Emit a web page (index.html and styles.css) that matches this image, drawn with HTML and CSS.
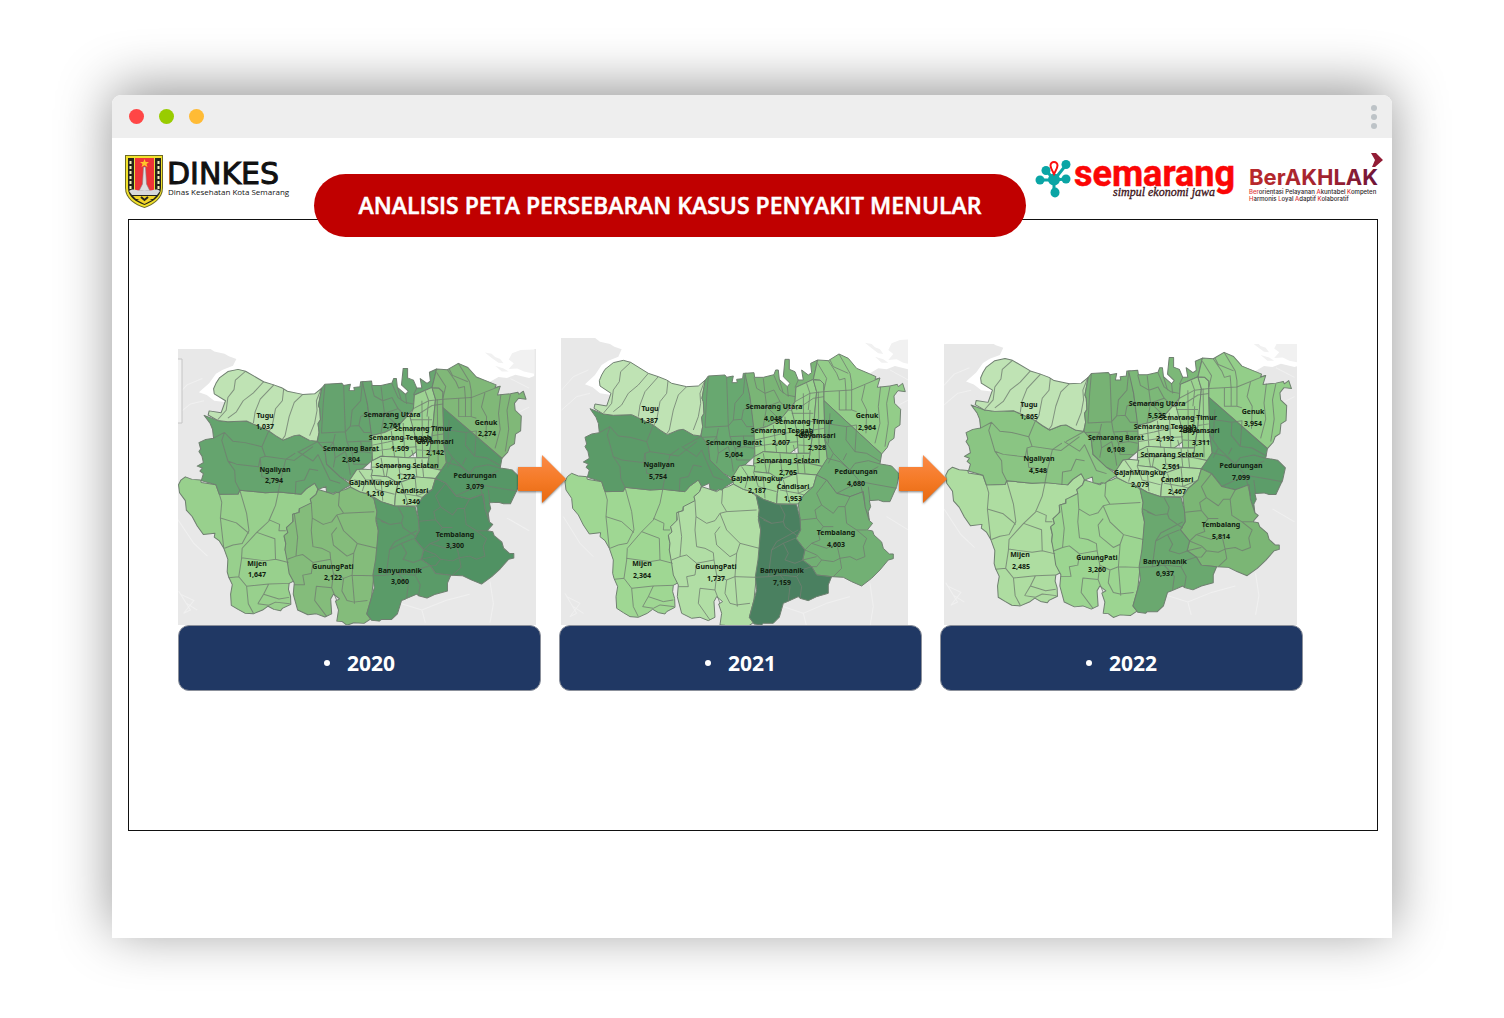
FILE: index.html
```html
<!DOCTYPE html>
<html lang="id">
<head>
<meta charset="utf-8">
<title>Analisis Peta Persebaran Kasus Penyakit Menular</title>
<meta name="viewport" content="width=device-width, initial-scale=1">
<link rel="stylesheet" href="styles.css">
</head>
<body>
<svg class="defs" aria-hidden="true">
  <defs>
    <linearGradient id="arrow-fill" x1="0" y1="0" x2="0" y2="1">
      <stop offset="0" stop-color="#fb8a48"/><stop offset=".5" stop-color="#f57b28"/><stop offset="1" stop-color="#e8690f"/>
    </linearGradient>
    <linearGradient id="akhlak-fill" x1="0" y1="0" x2="1" y2="0">
      <stop offset="0" stop-color="#b9292c"/><stop offset=".6" stop-color="#a22330"/><stop offset="1" stop-color="#6d1438"/>
    </linearGradient>

    <!-- Base map and the sixteen districts -->
    <g id="city">
      <rect class="land" x="0" y="-10" width="1120" height="960"/>
      <path class="sea" d="M130 20L150 35 180 42 193 50 215 58 205 80 175 92 155 105 135 135 105 163 128 172 150 190 185 195H1000L960 130 985 115 1010 118 1035 108 1075 118 1090 112V-10H130Z"/>
      <path class="land pale" d="M945 38L965 42 975 52 990 58 1000 72 985 70 965 55ZM1025 40L1050 30 1090 28V105L1060 98 1040 88 1015 90 1030 72 1015 60ZM975 80L1000 88 1015 98 995 98Z"/>
      <path class="land" d="M120 205L150 212 175 225 150 228Z"/>
      <path class="road" d="M35 180L70 140 115 120M35 240L80 200 120 190M45 790L80 850 60 860 90 820 50 800M70 830L100 850M700 830L760 850 830 820 900 800M760 850L770 890M960 760L970 830 960 890M1000 250L1075 210M1010 560L1075 600M40 560L90 640 130 680M1020 120L1075 150"/>
      <path class="d mijen" d="M45 455L52 440 65 430 85 438 110 440 112 448 155 455 165 485 220 484 225 472 300 480 340 478 405 485 420 468 445 450 455 466 449 485 432 500 437 515 430 522 415 534 400 530 398 542 382 548 380 575 362 590 366 606 355 618 360 640 358 660 368 690 380 712 378 740 385 758 370 766 368 785 374 806 375 832 350 845 345 852 325 848 308 838 292 850 265 862 240 860 220 848 200 835 198 800 203 770 192 745 188 730 190 690 178 655 165 632 150 620 152 608 118 612 100 585 85 555 68 535 65 505 48 480Z"/>
      <path class="d gunung" d="M455 470L480 478 500 485 515 475 535 470 550 462 580 478 602 484 620 500 628 540 625 570 632 600 630 640 628 690 618 750 612 810 598 862 610 878 590 892 560 890 540 898 525 886 510 885 515 850 506 822 518 815 500 800 492 815 495 862 475 872 450 862 425 865 395 850 382 800 385 765 370 735 365 700 358 660 360 640 355 615 366 606 362 590 382 570 380 548 400 542 400 530 435 512 432 500 449 485Z"/>
      <path class="d ngaliyan" d="M120 236L160 252 190 256 245 254 262 262 310 285 330 300 352 314 385 300 400 298 430 315 455 318 475 345 480 390 520 430 552 455 530 468 515 480 505 478 500 482 480 478 478 460 455 470 445 450 420 468 405 485 340 478 300 480 225 472 220 484 165 485 155 455 112 442 118 420 108 412 115 402 100 396 118 385 114 365 105 350 110 342 105 322 125 312 148 308 145 280 138 262Z"/>
      <path class="d tugu" d="M242 97L220 91 190 98 165 118 155 135 148 152 150 168 183 190 170 228 135 222 132 235 160 252 190 256 245 254 262 262 310 285 330 300 352 314 385 300 400 298 430 315 452 318 458 290 455 262 462 250 460 215 456 205 466 150 445 168 410 170 365 160 350 150 325 140 295 130Z"/>
      <path class="d barat" d="M466 150L475 138 525 135 530 142 550 138 546 158 562 158 560 148 578 146 580 130 590 130 600 200 612 290 618 330 612 380 585 405 568 408 548 445 520 430 480 390 475 345 453 318 458 290 455 262 462 250 460 215 456 205Z"/>
      <path class="d utara" d="M585 130L612 128 614 142 640 142 672 134 677 120 685 120 688 148 712 170 720 160 700 140 705 88 718 88 718 118 735 125 745 150 760 150 755 120 775 135 785 128 782 100 803 90 790 148 738 172 735 215 715 240 690 270 650 290 612 300 600 200Z"/>
      <path class="d tengah" d="M612 300L650 290 690 270 715 240 735 240 740 300 745 350 720 370 640 365 615 380Z"/>
      <path class="d timur" d="M738 172L790 148 800 185 795 240 790 300 780 370 745 370 740 300 725 240 735 215Z"/>
      <path class="d gayam" d="M790 150L810 150 822 162 822 212 825 330 832 385 820 410 775 400 780 370 790 300 795 240 800 185Z"/>
      <path class="d selatan" d="M612 380L640 365 720 370 780 370 775 400 820 410 800 435 740 430 690 450 660 430 610 425Z"/>
      <path class="d gajah" d="M548 440L568 408 585 405 615 408 612 425 660 430 690 450 682 490 680 522 640 508 620 495 602 484 580 478 550 462Z"/>
      <path class="d candi" d="M690 450L740 430 800 435 790 470 762 495 745 522 680 522 682 490Z"/>
      <path class="d genuk" d="M803 90L835 92 867 72 895 85 920 115 960 132 978 140 975 148 990 144 982 172 1020 168 1042 163 1045 170 1058 160 1066 185 1044 182 1032 198 1034 220 1052 238 1050 285 1035 295 1032 325 1018 335 1012 352 995 372 822 212 822 162 810 150 790 148Z"/>
      <path class="d pedur" d="M822 212L995 372 990 402 1010 405 1025 408 1048 432 1040 470 1020 515 1000 515 985 510 958 512 962 530 955 545 958 572 945 530 940 485 900 500 860 490 830 450 800 435 832 385 825 330Z"/>
      <path class="d tembalang" d="M745 522L762 495 790 470 800 435 830 450 860 490 900 500 940 485 945 530 958 572 968 580 952 600 968 603 972 615 995 636 1000 655 1018 672 1030 672 1030 686 1015 690 990 720 965 745 935 768 905 755 880 742 845 740 800 735 785 710 758 690 765 660 738 625 752 600 750 565Z"/>
      <path class="d banyu" d="M618 495L640 508 680 522 740 524 750 565 752 600 738 625 765 660 758 690 785 710 800 735 845 740 835 765 835 790 800 800 775 812 750 805 745 800 712 815 700 820 688 862 670 880 640 880 635 885 612 882 598 862 612 810 620 780 616 740 624 690 632 600 625 560 628 540Z"/>

      <!-- Village boundaries -->
      <g class="v">
        <path d="M242 97L212 125 208 155 190 180 185 220 160 250M295 130L265 165 235 190 215 225 190 245M325 140L285 185 270 225 265 260M354 152L350 190 330 215 320 270 312 285M410 170L385 195 370 240 358 300 350 312M465 150L450 190 452 220 445 260 430 300"/>
        <path d="M148 308L180 290 205 318 240 322 290 335 300 365 385 378 440 335M180 290L172 315 190 380 215 390 280 398 285 370 300 365M190 380L210 410 212 445 225 472M310 285L290 335M285 370L290 430 345 440 360 375 388 355M395 350L440 380 455 360 470 395 490 440 520 450M388 485L390 445 415 440 430 405 455 410M345 440L338 478M400 350L455 318"/>
        <path d="M165 485L172 510 168 560 178 655M225 472L245 545 252 600 232 640 205 645 180 655M168 560L215 575 252 608M338 480L330 520 310 570 275 605 232 655 230 690M310 565L342 580 340 600 360 600M275 605L328 625 330 690 300 695 230 685M330 690L368 700M230 690L222 745 192 748M222 745L245 775 310 768 370 766M245 775L250 830 265 860M310 768L295 800 278 830M295 800L340 815 370 810M278 830L310 835 330 825 372 830"/>
        <path d="M435 512L438 560 470 580 495 572 510 550 530 545 515 520 518 478M438 560L435 600 440 650 465 655 490 668 492 690 440 700 410 675 390 680 365 690M385 545L395 620 390 680M510 550L530 600 570 640 628 655M530 545L620 540M510 590L495 610 500 645 540 680 560 670 570 640M560 670L555 740 615 742M492 690L500 735 530 750 555 740 562 830M440 700L435 735 410 740 415 770 385 770M500 735L495 780 450 775 445 820 480 870M530 750L525 790 540 820 560 825 600 820M495 780L510 820"/>
        <path d="M475 140L470 200 465 292 535 288 530 140M535 288L550 270 555 220 580 190 585 135M457 322L500 320 505 295M500 320L505 370 535 350 545 390 550 425M535 288L540 320 580 318 612 318M550 270L575 268 590 290 610 290M540 320L555 355 585 350 612 355M500 320L480 350M575 268L580 240 605 225M505 370L500 400M555 355L560 390 600 390M580 318L585 350"/>
        <path d="M612 142L620 175 645 190 650 230 690 270M640 145L645 190 672 180 690 215 715 240M672 136L690 180 710 195 735 200M688 148L700 190M712 170L715 200M650 230L612 235M650 230L640 290M690 215L650 230M735 215L780 190 822 185 905 180 990 144M738 240L790 205 822 200M745 150L735 172M770 160L780 190 775 240"/>
        <path d="M615 330L660 320 700 310 745 305M640 295L645 365M670 285L680 368M705 260L710 370M725 250L790 250M740 280L822 270M745 320L825 320M745 345L828 350M760 190L762 370M780 240L778 300M805 185L808 400M790 300L822 295M615 350L645 345 680 340 745 335M730 345L735 365"/>
        <path d="M612 400L680 395 740 400 775 400M640 370L650 430M690 370L695 420 740 430M740 372L745 430M575 410L595 440 640 440 645 505M595 440L585 475M610 425L625 470 680 485M700 450L720 520M740 430L745 490 762 495M690 480L745 490 790 470M560 440L590 445M760 375L765 430M655 430L660 400 690 395"/>
        <path d="M835 92L860 130 868 150 885 145 888 185M803 100L830 145 822 180M867 72L900 130 905 160 905 240 868 240 868 183M920 245L905 240M945 165L935 210 950 240 948 310M992 170L985 230 990 280 975 340M1020 170L1010 220 1015 280 1005 350M888 185L888 240M840 90L850 110 895 130"/>
        <path d="M825 280L890 290 888 330 915 365M890 290L920 285 915 365 950 370 992 395M825 330L850 370 900 420 930 455 1040 475M850 370L835 400M900 420L915 400 955 392 990 402M832 385L870 395 900 420M930 455L945 520M860 490L900 470 930 455M950 430L985 410M955 470L960 512M840 250L835 340M880 390L890 370"/>
        <path d="M752 570L800 565 795 540 815 525 800 490 830 450M815 525L850 550 865 530 885 530 900 500M800 565L820 590 805 610 810 630 785 640 765 660M885 530L890 580 920 600 950 600M820 590L850 590M920 600L950 625 940 650 945 680 920 690 900 680 870 685 875 715 850 740M765 660L800 675 815 690 800 710 785 710M815 690L850 695 870 685M785 640L830 655 860 640 870 685M758 690L800 680"/>
        <path d="M628 560L665 580 700 575 705 555 690 525M700 575L705 590 745 620M745 600L680 635 665 660 655 740M665 660L700 640 715 670 705 690 735 700 760 690M655 740L616 742M655 740L690 735 740 740 755 720 785 710M740 740L755 770 750 805M700 640L735 625M690 735L720 770 715 812M665 580L640 570"/>
      </g>
    </g>
  </defs>
</svg>

<main class="window">
  <div class="titlebar">
    <span class="light close"></span><span class="light minimise"></span><span class="light expand"></span>
    <button class="menu" type="button" aria-label="Menu"><i></i><i></i><i></i></button>
  </div>

  <div class="slide">
    <header class="masthead">
      <svg class="brand dinkes" viewBox="0 0 165 54" role="img" aria-label="Dinkes Kota Semarang">
        <path d="M0 1H38V34C38 45 28 51 19.500 54C10 51 0 45 0 34Z" fill="#6d6a28"/>
        <path d="M1 2H37V34C37 44 28 50 19.500 53C10 50 1 44 1 34Z" fill="#f2e22b"/>
        <path d="M3 4H36V34C36 43 27 48 19.500 51C11 48 3 43 3 34Z" fill="#25241c"/>
        <path d="M9 4H30V38H9Z" fill="#e8dd3a"/>
        <path d="M10 4H29V38H10Z" fill="#ed3338"/>
        <path d="M5.500 7V35M33.500 7V35" stroke="#f4f1c0" stroke-width="2" stroke-dasharray="3 2"/>
        <path d="M18.500 13H20.500L21.500 30 25 37H14L17.500 30Z" fill="#dedfe2" stroke="#8d8080" stroke-width=".6"/>
        <path d="M19.500 5L20.700 8H24L21.500 10 22.500 13 19.500 11.300 16.500 13 17.500 10 15 8H18.300Z" fill="#ffc62b"/>
        <path d="M4 37C10 33 14 39 19.500 36C25 39 30 33 35 37L32 41H7Z" fill="#d7d8dc"/>
        <path d="M8 42H31L28 45H11ZM12 46L19.500 43 27 46 19.500 50Z" fill="#f2d52b"/>
        <path d="M16 43L19.500 46 23 43" fill="none" stroke="#25241c" stroke-width="2"/>
        <text class="dinkes-name" x="42" y="30">DINKES</text>
        <text class="dinkes-sub" x="43" y="41">Dinas Kesehatan Kota Semarang</text>
      </svg>

      <h1 class="title">ANALISIS PETA PERSEBARAN KASUS PENYAKIT MENULAR</h1>

      <div class="partners">
        <svg class="brand semarang" viewBox="0 0 203 50" role="img" aria-label="Semarang, simpul ekonomi jawa">
          <path d="M19 27L4 27M19 27L11 17M19 27L31 12M19 27L31 26M19 27V39" stroke="#0aa5a5" stroke-width="3"/>
          <g fill="#0aa5a5"><circle cx="19" cy="26.500" r="6"/><circle cx="5" cy="27" r="4.500"/><circle cx="11" cy="17.500" r="4.500"/><circle cx="31" cy="11.500" r="4.500"/><circle cx="31" cy="26" r="4.500"/><ellipse cx="20" cy="39.500" rx="4.500" ry="5"/></g>
          <path d="M19 21C17 17 15.500 15 15.500 12.500A3.500 3.500 0 0 1 22.500 12.500C22.500 15 21 17 19 21Z" fill="#fff" stroke="#fb0f0f" stroke-width="2"/>
          <text class="semarang-name" x="39" y="33">semarang</text>
          <text class="semarang-sub" x="78" y="43">simpul ekonomi jawa</text>
        </svg>
        <svg class="brand akhlak" viewBox="0 0 135 50" role="img" aria-label="BerAKHLAK">
          <text class="akhlak-name" x="0" y="32">BerAKHLAK</text>
          <path d="M122 0H127L134 7 126 14H123L126 7Z" fill="#921c35"/>
          <text class="akhlak-sub" x="0" y="41"><tspan>Ber</tspan>orientasi Pelayanan <tspan>A</tspan>kuntabel <tspan>K</tspan>ompeten</text>
          <text class="akhlak-sub" x="0" y="48"><tspan>H</tspan>armonis <tspan>L</tspan>oyal <tspan>A</tspan>daptif <tspan>K</tspan>olaboratif</text>
        </svg>
      </div>
    </header>

    <section class="frame">
      <figure class="year y2020">
        <svg class="map" viewBox="178 335 363 290" role="img" aria-label="Peta kasus 2020">
          <svg x="178" y="349" width="358" height="276" viewBox="178 349 358 276"><use href="#city" transform="translate(163.200 340.500) scale(.3404 .3171)"/><path class="tab" d="M178 359H182V423H178"/></svg>
          <g class="labels">
            <text x="265" y="418">Tugu<tspan x="265" dy="11">1,037</tspan></text>
            <text x="275" y="472">Ngaliyan<tspan x="274" dy="11">2,794</tspan></text>
            <text x="351" y="451">Semarang Barat<tspan x="351" dy="11">2,804</tspan></text>
            <text x="392" y="417">Semarang Utara<tspan x="392" dy="11">2,761</tspan></text>
            <text x="423" y="431">Semarang Timur<tspan x="423" dy="11">1,839</tspan></text>
            <text x="400" y="440">Semarang Tengah<tspan x="400" dy="11">1,509</tspan></text>
            <text x="435" y="444">Gayamsari<tspan x="435" dy="11">2,142</tspan></text>
            <text x="407" y="468">Semarang Selatan<tspan x="406" dy="11">1,272</tspan></text>
            <text x="375" y="485">GajahMungkur<tspan x="375" dy="11">1,216</tspan></text>
            <text x="412" y="493">Candisari<tspan x="411" dy="11">1,346</tspan></text>
            <text x="486" y="425">Genuk<tspan x="487" dy="11">2,274</tspan></text>
            <text x="475" y="478">Pedurungan<tspan x="475" dy="11">3,079</tspan></text>
            <text x="455" y="537">Tembalang<tspan x="455" dy="11">3,300</tspan></text>
            <text x="400" y="573">Banyumanik<tspan x="400" dy="11">3,060</tspan></text>
            <text x="333" y="569">GunungPati<tspan x="333" dy="11">2,122</tspan></text>
            <text x="257" y="566">Mijen<tspan x="257" dy="11">1,647</tspan></text>
          </g>
        </svg>
        <figcaption>2020</figcaption>
        <svg class="arrow" viewBox="0 0 50 50" aria-hidden="true"><path d="M1 13H25V1L49 25 25 49V37H1Z"/></svg>
      </figure>

      <figure class="year y2021">
        <svg class="map" viewBox="559 335 363 290" role="img" aria-label="Peta kasus 2021">
          <svg x="561" y="338" width="347" height="287" viewBox="561 338 347 287"><use href="#city" transform="translate(550 330) scale(.3333)"/></svg>
          <g class="labels">
            <text x="650" y="411">Tugu<tspan x="649" dy="12">1,387</tspan></text>
            <text x="659" y="467">Ngaliyan<tspan x="658" dy="12">5,754</tspan></text>
            <text x="734" y="445">Semarang Barat<tspan x="734" dy="12">5,064</tspan></text>
            <text x="774" y="409">Semarang Utara<tspan x="773" dy="12">4,048</tspan></text>
            <text x="804" y="424">Semarang Timur<tspan x="804" dy="12">2,808</tspan></text>
            <text x="782" y="433">Semarang Tengah<tspan x="781" dy="12">2,607</tspan></text>
            <text x="817" y="438">Gayamsari<tspan x="817" dy="12">2,928</tspan></text>
            <text x="788" y="463">Semarang Selatan<tspan x="788" dy="12">2,765</tspan></text>
            <text x="757" y="481">GajahMungkur<tspan x="757" dy="12">2,187</tspan></text>
            <text x="793" y="489">Candisari<tspan x="793" dy="12">1,953</tspan></text>
            <text x="867" y="418">Genuk<tspan x="867" dy="12">2,964</tspan></text>
            <text x="856" y="474">Pedurungan<tspan x="856" dy="12">4,680</tspan></text>
            <text x="836" y="535">Tembalang<tspan x="836" dy="12">4,603</tspan></text>
            <text x="782" y="573">Banyumanik<tspan x="782" dy="12">7,159</tspan></text>
            <text x="716" y="569">GunungPati<tspan x="716" dy="12">1,737</tspan></text>
            <text x="642" y="566">Mijen<tspan x="642" dy="12">2,364</tspan></text>
          </g>
        </svg>
        <figcaption>2021</figcaption>
        <svg class="arrow" viewBox="0 0 50 50" aria-hidden="true"><path d="M1 13H25V1L49 25 25 49V37H1Z"/></svg>
      </figure>

      <figure class="year y2022">
        <svg class="map" viewBox="940 335 363 290" role="img" aria-label="Peta kasus 2022">
          <svg x="944" y="344" width="353" height="281" viewBox="944 344 353 281"><use href="#city" transform="translate(930.500 329.200) scale(.3386 .321)"/></svg>
          <g class="labels">
            <text x="1029" y="407">Tugu<tspan x="1029" dy="12">1,865</tspan></text>
            <text x="1039" y="461">Ngaliyan<tspan x="1038" dy="12">4,548</tspan></text>
            <text x="1116" y="440">Semarang Barat<tspan x="1116" dy="12">6,108</tspan></text>
            <text x="1157" y="406">Semarang Utara<tspan x="1157" dy="12">5,525</tspan></text>
            <text x="1188" y="420">Semarang Timur<tspan x="1188" dy="12">2,883</tspan></text>
            <text x="1165" y="429">Semarang Tengah<tspan x="1165" dy="12">2,192</tspan></text>
            <text x="1201" y="433">Gayamsari<tspan x="1201" dy="12">3,311</tspan></text>
            <text x="1172" y="457">Semarang Selatan<tspan x="1171" dy="12">2,561</tspan></text>
            <text x="1140" y="475">GajahMungkur<tspan x="1140" dy="12">2,079</tspan></text>
            <text x="1177" y="482">Candisari<tspan x="1177" dy="12">2,467</tspan></text>
            <text x="1253" y="414">Genuk<tspan x="1253" dy="12">3,954</tspan></text>
            <text x="1241" y="468">Pedurungan<tspan x="1241" dy="12">7,099</tspan></text>
            <text x="1221" y="527">Tembalang<tspan x="1221" dy="12">5,814</tspan></text>
            <text x="1165" y="564">Banyumanik<tspan x="1165" dy="12">6,937</tspan></text>
            <text x="1097" y="560">GunungPati<tspan x="1097" dy="12">3,260</tspan></text>
            <text x="1020" y="557">Mijen<tspan x="1021" dy="12">2,485</tspan></text>
          </g>
        </svg>
        <figcaption>2022</figcaption>
      </figure>
    </section>
  </div>
</main>
</body>
</html>
```
FILE: styles.css
```css
* { box-sizing: border-box; }

body {
  margin: 0;
  padding: 95px 112px 80px;
  background: #fff;
  font-family: "Open Sans", "Noto Sans", sans-serif;
}

.defs { position: absolute; width: 0; height: 0; }

.window {
  border-radius: 9px 9px 0 0;
  background: #fff;
  box-shadow: 0 -7px 54px rgba(0, 0, 0, .42);
}

.titlebar {
  display: flex;
  align-items: center;
  gap: 15px;
  height: 43px;
  padding: 0 15px 0 17px;
  border-radius: 9px 9px 0 0;
  background: #eee;
}
.light { width: 15px; height: 15px; border-radius: 50%; }
.close { background: #ff4646; }
.minimise { background: #9c0; }
.expand { background: #ffbb35; }
.menu {
  display: flex;
  flex-direction: column;
  gap: 3px;
  margin-left: auto;
  padding: 0;
  border: 0;
  background: none;
}
.menu i { width: 6px; height: 6px; border-radius: 50%; background: #bdc3c7; }

.slide { padding: 0 14px 107px 16px; }

.masthead {
  position: relative;
  display: flex;
  align-items: flex-start;
  margin: 0 -6px -18px -3px;
}
.brand { display: block; flex: none; overflow: visible; }
.dinkes { width: 165px; height: 54px; margin-top: 16px; }
.dinkes-name { font: 30px "DejaVu Sans", sans-serif; stroke: #111; stroke-width: 1px; fill: #111; }
.dinkes-sub { font: 500 8px "Open Sans", sans-serif; fill: #111; }

.title {
  flex: 1;
  margin: 36px 9px 0 24px;
  border-radius: 32px;
  background: #c00000;
  color: #fff;
  font: 600 23px/63px "Open Sans", sans-serif;
  -webkit-text-stroke: .5px #fff;
  text-align: center;
  white-space: nowrap;
}

.partners { display: flex; gap: 11px; margin-top: 15px; }
.semarang { width: 203px; height: 50px; }
.semarang-name { font: 700 36px Roboto, sans-serif; fill: #fb0606; stroke: #fb0606; stroke-width: .5px; }
.semarang-sub { font: italic 12px "Liberation Serif", serif; fill: #3c1318; stroke: #3c1318; stroke-width: .3px; }
.akhlak { width: 135px; height: 50px; }
.akhlak-name { font: 700 22px Inter, sans-serif; fill: url(#akhlak-fill); }
.akhlak-sub { font: 500 6px Inter, sans-serif; fill: #2c2628; }
.akhlak-sub tspan { fill: #e0343a; }

.frame {
  display: grid;
  grid-template-columns: repeat(3, 1fr);
  gap: 18px;
  padding: 115px 74px 139px 49px;
  border: 1px solid #111;
}
.year { position: relative; margin: 0; }
.map { display: block; width: 100%; height: auto; }

.year figcaption {
  display: flex;
  align-items: center;
  justify-content: center;
  gap: 17px;
  height: 66px;
  padding-top: 10px;
  border: 1px solid #8b909b;
  border-radius: 11px;
  background: #203864;
  color: #fff;
  font: 700 21px/30px "Open Sans", sans-serif;
}
.year figcaption::before { content: ""; width: 6px; height: 6px; border-radius: 50%; background: #fff; }

.arrow {
  position: absolute;
  z-index: 1;
  top: 119px;
  right: -26px;
  width: 50px;
  height: 50px;
  filter: drop-shadow(0 1px 1px rgba(0, 0, 0, .5));
}
.arrow path { fill: url(#arrow-fill); }

.land { fill: #e8e8e8; }
.pale { fill: #f1f1f1; }
.sea { fill: #fff; }
.road { fill: none; stroke: #f0f0f0; stroke-width: 3; }
.tab { fill: #f1f1f1; stroke: #c4c4c4; }
.d { stroke: #6f7f70; stroke-width: 3; stroke-linejoin: round; }
.v { fill: none; stroke: #717d71; stroke-opacity: .8; stroke-width: 3; stroke-linejoin: round; }
.labels { font: 700 7px "Noto Sans", sans-serif; fill: #10200f; text-anchor: middle; }

.tugu { fill: #bfe3b4; }
.ngaliyan { fill: var(--ngaliyan); }
.mijen { fill: var(--mijen); }
.gunung { fill: var(--gunung); }
.barat { fill: var(--barat); }
.utara { fill: var(--utara); }
.tengah { fill: var(--tengah); }
.timur { fill: var(--timur); }
.gayam { fill: var(--gayam); }
.selatan { fill: var(--selatan); }
.gajah { fill: var(--gajah); }
.candi { fill: var(--candi); }
.genuk { fill: var(--genuk); }
.pedur { fill: var(--pedur); }
.tembalang { fill: var(--tembalang); }
.banyu { fill: var(--banyu); }

.y2020 {
  --ngaliyan: #65a46e; --mijen: #98d08d; --gunung: #84bc7b; --barat: #65a36e;
  --utara: #68a670; --tengah: #a4d999; --timur: #9dd392; --gayam: #82bb79;
  --selatan: #afdea3; --gajah: #b1dea5; --candi: #abdb9f; --genuk: #80b878;
  --pedur: #569766; --tembalang: #509263; --banyu: #5a9b68;
}
.y2021 {
  --ngaliyan: #5b9b68; --mijen: #9fd793; --gunung: #b1dea5; --barat: #68a870;
  --utara: #7ab576; --tengah: #9bd490; --timur: #99d28e; --gayam: #93cd89;
  --selatan: #96d08b; --gajah: #a3d998; --candi: #a9dc9e; --genuk: #93cd89;
  --pedur: #6fad73; --tembalang: #72b074; --banyu: #4a8060;
}
.y2022 {
  --ngaliyan: #8ac583; --mijen: #aedda1; --gunung: #9cd591; --barat: #77b274;
  --utara: #7cb878; --tengah: #b2dfa6; --timur: #9cd490; --gayam: #9dd592;
  --selatan: #abdc9f; --gajah: #b5e1a9; --candi: #aedda2; --genuk: #93ce89;
  --pedur: #5c9d69; --tembalang: #7bb675; --banyu: #6aa86f;
}
```
